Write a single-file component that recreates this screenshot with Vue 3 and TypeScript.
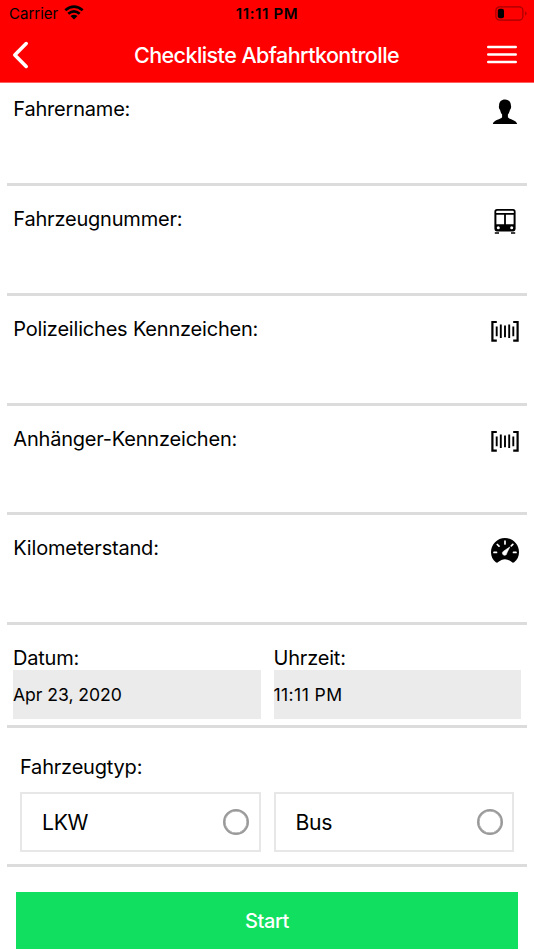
<script setup lang="ts">
import { ref } from 'vue'

type IconName = 'person' | 'bus' | 'barcode' | 'gauge'
interface Field { id: string; label: string; icon: IconName }

const fields: Field[] = [
  { id: 'driver', label: 'Fahrername:', icon: 'person' },
  { id: 'vehicle', label: 'Fahrzeugnummer:', icon: 'bus' },
  { id: 'plate', label: 'Polizeiliches Kennzeichen:', icon: 'barcode' },
  { id: 'trailer', label: 'Anhänger-Kennzeichen:', icon: 'barcode' },
  { id: 'km', label: 'Kilometerstand:', icon: 'gauge' },
]
const types = ['LKW', 'Bus']
const selected = ref<string | null>(null)
</script>

<template>
  <div class="screen">
    <header class="header">
      <div class="status">
        <div class="carrier">
          <span>Carrier</span>
          <svg width="20" height="15" viewBox="0 0 20 15" fill="none" stroke="#000" stroke-width="2.7">
            <path d="M1.3 5.3Q10 -2.1 18.7 5.3M4.3 8.7Q10 4 15.7 8.7" />
            <path d="M6.5 11Q10 8.3 13.5 11L10 14.4Z" fill="#000" stroke="none" />
          </svg>
        </div>
        <span class="clock">11:11 PM</span>
        <svg class="battery" width="32" height="15" viewBox="0 0 32 15">
          <rect x=".9" y=".9" width="27" height="13.2" rx="3.6" fill="none" stroke="#a40000" stroke-width="1.2" />
          <rect x="2.8" y="2.7" width="6.2" height="9.6" rx="2" />
          <path d="M30.2 5.3Q33 7.5 30.2 9.7Z" fill="#a40000" />
        </svg>
      </div>
      <div class="nav">
        <svg width="18" height="28" viewBox="0 0 18 28" fill="none" stroke="#fff" stroke-width="3.6" stroke-linecap="round" stroke-linejoin="round">
          <path d="M14.2 2.6L2.8 14L14.2 25.4" />
        </svg>
        <h1>Checkliste Abfahrtkontrolle</h1>
        <svg width="30" height="19" viewBox="0 0 30 19" stroke="#fff" stroke-width="2.6" stroke-linecap="round">
          <path d="M1.3 2H28.7M1.3 9.5H28.7M1.3 17H28.7" />
        </svg>
      </div>
    </header>

    <main>
      <section v-for="f in fields" :key="f.id" class="field">
        <span class="label">{{ f.label }}</span>
        <svg v-if="f.icon === 'person'" width="30" height="30" viewBox="0 0 30 30">
          <path d="M15 2.5C18.8 2.5 21 4.9 20.9 8.6C21.4 9.7 21 12.2 20 12.8C19.5 15.2 18.7 16.5 17.9 17.5V20.3C18.9 22.5 26.4 22.6 27.2 27.1H2.8C3.6 22.6 11.1 22.5 12.1 20.3V17.5C11.3 16.5 10.5 15.2 10 12.8C9 12.2 8.6 9.7 9.1 8.6C9 4.9 11.2 2.5 15 2.5Z" />
        </svg>
        <svg v-else-if="f.icon === 'bus'" width="30" height="30" viewBox="0 0 30 30">
          <path fill-rule="evenodd" d="M7 2.1H23Q25.6 2.1 25.6 4.7V22Q25.6 24.4 23.2 24.4H6.8Q4.4 24.4 4.4 22V4.7Q4.4 2.1 7 2.1ZM7.2 3.8Q6.2 3.8 6.2 4.8V6.1H23.8V4.8Q23.8 3.8 22.8 3.8ZM6.4 7.8V17.3H14.1V7.8ZM15.9 7.8V17.3H23.6V7.8Z" />
          <path d="M4.8 25.2H9V26.8H4.8ZM21 25.2H25.2V26.8H21Z" />
          <circle cx="8.3" cy="20.8" r="1.5" fill="#fff" /><circle cx="21.7" cy="20.8" r="1.5" fill="#fff" />
        </svg>
        <svg v-else-if="f.icon === 'barcode'" width="30" height="30" viewBox="0 0 30 30" fill="none" stroke="#000">
          <path stroke-width="2.2" d="M6.8 5H2.4V23.6H6.8M23.2 5H27.6V23.6H23.2" />
          <path stroke-width="1.9" d="M6.7 9.4V19.2M10.8 7.6V21M15 8.4V20.2M19.2 7.6V21M23.3 9.4V19.2" />
        </svg>
        <svg v-else width="30" height="30" viewBox="0 0 30 30">
          <path d="M5.8 26.3C2.8 23.8 1 20.3 1 16.2C1 8.3 7.2 2 15 2S29 8.3 29 16.2C29 20.3 27.2 23.8 24.2 26.3Q22.8 27.2 21.8 26.1C17.7 22.2 12.3 22.2 8.2 26.1Q7.2 27.2 5.8 26.3Z" />
          <path d="M4 16.4H6.5M23.5 16.4H26M15 5.2V8M7.3 8.5L9 10.2M21.3 9.8L22.8 8.4" fill="none" stroke="#fff" stroke-width="1.7" stroke-linecap="round" />
          <path d="M19.8 11L16.8 17.1A2.2 2.2 0 1 1 13.5 15.2Z" fill="#fff" stroke="#fff" stroke-width=".6" />
        </svg>
      </section>

      <section class="datetime">
        <div>
          <span class="label">Datum:</span>
          <div class="value">Apr 23, 2020</div>
        </div>
        <div>
          <span class="label">Uhrzeit:</span>
          <div class="value time">11:11 PM</div>
        </div>
      </section>

      <section class="kind">
        <span class="label">Fahrzeugtyp:</span>
        <div class="options">
          <button v-for="t in types" :key="t" class="option" @click="selected = t">
            <span>{{ t }}</span>
            <i class="radio" :class="{ on: selected === t }"></i>
          </button>
        </div>
      </section>

      <button class="start">Start</button>
    </main>
  </div>
</template>

<style>
body { margin: 0; background: #fff; }
</style>

<style scoped>
* { box-sizing: border-box; }
.screen { width: 534px; height: 950px; overflow: hidden; background: #fff; color: #000; font-family: Inter, "Liberation Sans", sans-serif; }
button { font: inherit; color: inherit; border: 0; background: none; padding: 0; }
svg { display: block; flex: none; }
.header { height: 83px; background: linear-gradient(#f00 82px, #ff6060 82px); }
.status { height: 27px; padding: 0 7px 0 9px; display: grid; grid-template-columns: 1fr auto 1fr; align-items: center; font-size: 15px; }
.carrier { display: flex; align-items: center; gap: 6px; }
.carrier svg { margin-top: -2px; }
.clock { margin: 0 1px 0 -1px; font-weight: 600; font-size: 15px; letter-spacing: .65px; }
.battery { justify-self: end; }
.nav { height: 55px; padding: 0 17px 0 12px; display: grid; grid-template-columns: 1fr auto 1fr; align-items: center; }
.nav svg:last-child { justify-self: end; }
.nav h1 { margin: 0 -2px 0 2px; font-size: 21.5px; font-weight: 500; color: #fff; letter-spacing: -.56px; line-height: 28px; }
main { padding: 0 7px; display: flex; flex-direction: column; }
.field { height: 109.75px; padding: 21px 7px 0 6.3px; border-bottom: 3px solid #dcdcdc; display: flex; justify-content: space-between; }
.field:first-child { height: 103px; padding-top: 14px; }
.label { display: block; font-size: 20px; line-height: 26px; letter-spacing: -.2px; white-space: nowrap; }
.field .label { line-height: 24px; }
.datetime { height: 103px; padding: 20px 6px 0; border-bottom: 3px solid #dcdcdc; display: grid; grid-template-columns: 1fr 1fr; gap: 13px; }
.datetime .label { height: 25px; }
.value { height: 49px; background: #ebebeb; font-size: 17.6px; line-height: 49px; letter-spacing: -.05px; }
.time { letter-spacing: .4px; }
.kind { height: 139px; padding: 26px 13px 0; border-bottom: 3px solid #dcdcdc; }
.options { margin-top: 12px; display: grid; grid-template-columns: 1fr 1fr; gap: 13px; }
.option { height: 60px; border: 2px solid #e7e7e7; padding: 0 9.5px 0 20px; display: flex; align-items: center; justify-content: space-between; font-size: 21.2px; letter-spacing: -.3px; }
.radio { width: 26px; height: 26px; border: 2.5px solid #999; border-radius: 50%; box-shadow: inset 0 0 0 .5px #999; }
.radio.on { background: #11df60; }
.start { margin: 25px 9px 0; height: 57px; background: #11df60; color: #fff; font-size: 20px; font-weight: 500; letter-spacing: -.4px; }
</style>
